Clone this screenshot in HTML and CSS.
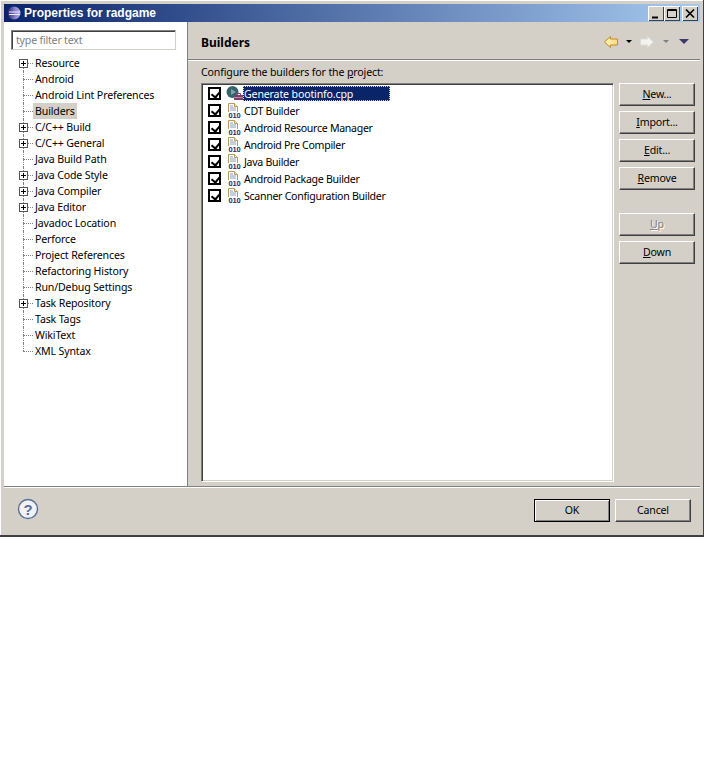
FILE: index.html
```html
<!DOCTYPE html>
<html lang="en">
<head>
  <meta charset="UTF-8">
  <meta name="viewport" content="width=device-width, initial-scale=1.0">
  <title>Properties for radgame</title>
  <link rel="stylesheet" href="styles.css">
</head>
<body>
  <div class="window">
    <div class="titlebar">
      <svg class="app-icon" width="14" height="14" viewBox="0 0 14 14">
        <defs>
          <linearGradient id="globe" x1="0" x2="1" y1="0" y2="0">
            <stop offset="0" stop-color="#2a2470"/>
            <stop offset=".6" stop-color="#8c86d0"/>
            <stop offset="1" stop-color="#b4aee4"/>
          </linearGradient>
          <linearGradient id="backFill" x1="0" x2="1" y1="0" y2="0">
            <stop offset="0" stop-color="#fff2b8"/>
            <stop offset="1" stop-color="#fbdc80"/>
          </linearGradient>
        </defs>
        <circle cx="7" cy="7" r="6.500" fill="url(#globe)"/>
        <path d="M2 6h11M2 8.500h11" stroke="#eeeef8"/>
      </svg>
      <span class="title">Properties for radgame</span>
      <div class="win-buttons">
        <button class="win-btn"><svg width="14" height="13" viewBox="0 0 14 13"><path d="M3 9.500h6v2H3z" fill="#000"/></svg></button>
        <button class="win-btn"><svg width="14" height="13" viewBox="0 0 14 13"><path d="M2.500 2.500h9v8h-9zM2 3.500h10" fill="none" stroke="#000"/></svg></button>
        <button class="win-btn close"><svg width="14" height="13" viewBox="0 0 14 13"><path d="M3 2.500l8 8M11 2.500l-8 8" fill="none" stroke="#000" stroke-width="1.700"/></svg></button>
      </div>
    </div>

    <div class="content">
      <div class="sidebar">
        <input class="filter" type="text" placeholder="type filter text">
        <ul class="tree">
          <li class="node"><span class="guide"><span class="box"></span></span><span class="label">Resource</span></li>
          <li class="node"><span class="guide"></span><span class="label">Android</span></li>
          <li class="node"><span class="guide"></span><span class="label">Android Lint Preferences</span></li>
          <li class="node"><span class="guide"></span><span class="label current">Builders</span></li>
          <li class="node"><span class="guide"><span class="box"></span></span><span class="label">C/C++ Build</span></li>
          <li class="node"><span class="guide"><span class="box"></span></span><span class="label">C/C++ General</span></li>
          <li class="node"><span class="guide"></span><span class="label">Java Build Path</span></li>
          <li class="node"><span class="guide"><span class="box"></span></span><span class="label">Java Code Style</span></li>
          <li class="node"><span class="guide"><span class="box"></span></span><span class="label">Java Compiler</span></li>
          <li class="node"><span class="guide"><span class="box"></span></span><span class="label">Java Editor</span></li>
          <li class="node"><span class="guide"></span><span class="label">Javadoc Location</span></li>
          <li class="node"><span class="guide"></span><span class="label">Perforce</span></li>
          <li class="node"><span class="guide"></span><span class="label">Project References</span></li>
          <li class="node"><span class="guide"></span><span class="label">Refactoring History</span></li>
          <li class="node"><span class="guide"></span><span class="label">Run/Debug Settings</span></li>
          <li class="node"><span class="guide"><span class="box"></span></span><span class="label">Task Repository</span></li>
          <li class="node"><span class="guide"></span><span class="label">Task Tags</span></li>
          <li class="node"><span class="guide"></span><span class="label">WikiText</span></li>
          <li class="node last"><span class="guide"></span><span class="label">XML Syntax</span></li>
        </ul>
      </div>

      <div class="main">
        <div class="page-head">
          <h1>Builders</h1>
          <div class="nav-tools">
            <svg width="16" height="14" viewBox="0 0 16 14"><path d="M7.500 1.500L1.500 7l6 5.500V10h7V4h-7z" fill="url(#backFill)" stroke="#c98a1c"/></svg>
            <span class="drop dark"></span>
            <svg class="nav-fwd" width="16" height="14" viewBox="0 0 16 14"><path d="M8.500 1.500l6 5.500-6 5.500V10h-7V4h7z" fill="#f4f3f0" stroke="#dedcd6"/></svg>
            <span class="drop muted"></span>
            <span class="drop menu"></span>
          </div>
        </div>

        <div class="page-body">
          <p class="intro">Configure the builders for the <u>p</u>roject:</p>
          <div class="builders">
            <ul class="list">
              <li class="item">
                <span class="check"></span>
                <svg class="item-icon" width="18" height="17" viewBox="0 0 18 17">
                  <circle cx="7.500" cy="7" r="6" fill="#33646c"/>
                  <path d="M6 4l5 3-5 3z" fill="#7fa3a8"/>
                  <rect x="9" y="10" width="9" height="5" fill="#7c3f6a"/>
                  <path d="M9 12.500h9" stroke="#b98aa8"/>
                  <path d="M11.500 10V8.500h4V10" fill="none" stroke="#7c3f6a"/>
                </svg>
                <span class="item-text selected">Generate bootinfo.cpp</span>
              </li>
              <li class="item"><span class="check"></span><svg class="item-icon" width="18" height="17" viewBox="0 0 18 17"><path class="page" d="M3.500 10V1.500h6l3 3V10"/><path class="fold" d="M9.500 1.500v3h3"/><path class="lines" d="M5 4h3M5 6h6M5 8h6"/><text x="9.500" y="16" class="bin-text">010</text></svg><span class="item-text">CDT Builder</span></li>
              <li class="item"><span class="check"></span><svg class="item-icon" width="18" height="17" viewBox="0 0 18 17"><path class="page" d="M3.500 10V1.500h6l3 3V10"/><path class="fold" d="M9.500 1.500v3h3"/><path class="lines" d="M5 4h3M5 6h6M5 8h6"/><text x="9.500" y="16" class="bin-text">010</text></svg><span class="item-text">Android Resource Manager</span></li>
              <li class="item"><span class="check"></span><svg class="item-icon" width="18" height="17" viewBox="0 0 18 17"><path class="page" d="M3.500 10V1.500h6l3 3V10"/><path class="fold" d="M9.500 1.500v3h3"/><path class="lines" d="M5 4h3M5 6h6M5 8h6"/><text x="9.500" y="16" class="bin-text">010</text></svg><span class="item-text">Android Pre Compiler</span></li>
              <li class="item"><span class="check"></span><svg class="item-icon" width="18" height="17" viewBox="0 0 18 17"><path class="page" d="M3.500 10V1.500h6l3 3V10"/><path class="fold" d="M9.500 1.500v3h3"/><path class="lines" d="M5 4h3M5 6h6M5 8h6"/><text x="9.500" y="16" class="bin-text">010</text></svg><span class="item-text">Java Builder</span></li>
              <li class="item"><span class="check"></span><svg class="item-icon" width="18" height="17" viewBox="0 0 18 17"><path class="page" d="M3.500 10V1.500h6l3 3V10"/><path class="fold" d="M9.500 1.500v3h3"/><path class="lines" d="M5 4h3M5 6h6M5 8h6"/><text x="9.500" y="16" class="bin-text">010</text></svg><span class="item-text">Android Package Builder</span></li>
              <li class="item"><span class="check"></span><svg class="item-icon" width="18" height="17" viewBox="0 0 18 17"><path class="page" d="M3.500 10V1.500h6l3 3V10"/><path class="fold" d="M9.500 1.500v3h3"/><path class="lines" d="M5 4h3M5 6h6M5 8h6"/><text x="9.500" y="16" class="bin-text">010</text></svg><span class="item-text">Scanner Configuration Builder</span></li>
            </ul>
            <div class="side-buttons">
              <button class="btn"><u>N</u>ew...</button>
              <button class="btn"><u>I</u>mport...</button>
              <button class="btn"><u>E</u>dit...</button>
              <button class="btn"><u>R</u>emove</button>
              <button class="btn disabled gap-top"><u>U</u>p</button>
              <button class="btn"><u>D</u>own</button>
            </div>
          </div>
        </div>
      </div>
    </div>

    <div class="footer">
      <svg class="help" width="22" height="22" viewBox="0 0 22 22">
        <circle cx="11" cy="11" r="9.500" fill="#f2f2f4" stroke="#56709c" stroke-width="1.400"/>
        <text x="11" y="16.500" class="help-mark">?</text>
      </svg>
      <div class="actions">
        <button class="btn default">OK</button>
        <button class="btn">Cancel</button>
      </div>
    </div>
  </div>
</body>
</html>
```

FILE: styles.css
```css
/* General Styles */
* {
  margin: 0;
  padding: 0;
  box-sizing: border-box;
}

body {
  font-family: "Noto Sans", Tahoma, sans-serif;
  font-size: 10.6px;
  letter-spacing: -0.2px;
  color: #000;
  background-color: #fff;
  overflow: hidden;
}

ul {
  list-style: none;
}

/* Window frame */
.window {
  width: 704px;
  height: 537px;
  display: flex;
  flex-direction: column;
  padding: 4px 3px 4px 4px;
  background: #d4d0c8;
  border-right: 1px solid #404040;
  border-bottom: 2px solid #404040;
  box-shadow: inset 1px 1px 0 #fff;
}

.titlebar {
  height: 18px;
  flex: none;
  display: flex;
  align-items: center;
  padding-left: 3px;
  background: linear-gradient(to right, #0a246a, #a6caf0);
}

.app-icon {
  flex: none;
}

.title {
  margin-left: 3px;
  font-family: "Liberation Sans", sans-serif;
  font-size: 12px;
  font-weight: bold;
  letter-spacing: 0;
  color: #fff;
}

.win-buttons {
  margin-left: auto;
  margin-right: 2px;
  display: flex;
}

.win-btn {
  width: 16px;
  height: 15px;
  display: flex;
  align-items: center;
  justify-content: center;
  background: #d4d0c8;
  border: none;
  box-shadow: inset 1px 1px 0 #fff, inset -1px -1px 0 #404040;
}

.win-btn.close {
  margin-left: 2px;
}

.content {
  flex: 1;
  display: flex;
  min-height: 0;
  border-bottom: 1px solid #fff;
  box-shadow: inset 0 -1px 0 #808080;
}

/* Left tree */
.sidebar {
  width: 184px;
  flex: none;
  background: #fff;
  padding: 8px 7px 0;
  margin-bottom: 1px;
  border-right: 1px solid #808080;
}

.filter {
  display: block;
  width: 165px;
  height: 20px;
  padding: 0 4px;
  font: inherit;
  letter-spacing: inherit;
  border: 1px solid #808080;
  border-right-color: #d4d0c8;
  border-bottom-color: #d4d0c8;
  box-shadow: inset 1px 1px 0 #404040, inset -1px -1px 0 #fff;
  outline: none;
}

.filter::placeholder {
  color: #808080;
  opacity: 1;
}

.tree {
  margin-top: 5px;
}

.node {
  height: 16px;
  display: flex;
  align-items: center;
}

.guide {
  position: relative;
  width: 22px;
  height: 16px;
  flex: none;
}

.guide::before {
  content: "";
  position: absolute;
  left: 12px;
  top: 0;
  bottom: 0;
  border-left: 1px dotted #808080;
}

.guide::after {
  content: "";
  position: absolute;
  left: 12px;
  top: 8px;
  width: 10px;
  border-top: 1px dotted #808080;
}

.node:first-child .guide::before {
  top: 8px;
}

.node.last .guide::before {
  bottom: 8px;
}

/* expander drawn over the guide lines */
.box {
  position: absolute;
  z-index: 1;
  left: 8px;
  top: 4px;
  width: 9px;
  height: 9px;
  border: 1px solid #555;
  background:
    linear-gradient(#000, #000) center / 5px 1px no-repeat,
    linear-gradient(#000, #000) center / 1px 5px no-repeat,
    #fff;
}

.label {
  padding: 0 2px;
  height: 16px;
  line-height: 16px;
  white-space: nowrap;
  letter-spacing: -0.15px;
}

.label.current {
  background: #d4d0c8;
}

/* Right page */
.main {
  flex: 1;
  min-width: 0;
  display: flex;
  flex-direction: column;
}

.page-head {
  height: 38px;
  flex: none;
  display: flex;
  align-items: center;
  justify-content: space-between;
  padding: 2px 11px 0 13px;
  border-bottom: 1px solid #808080;
  box-shadow: 0 1px 0 #fff;
}

h1 {
  padding-top: 1px;
  font-size: 12px;
  font-weight: bold;
  letter-spacing: 0;
}

.nav-tools {
  display: flex;
  align-items: center;
}

.nav-fwd {
  margin-left: 7px;
}

.drop {
  width: 0;
  height: 0;
  margin-left: 7px;
  border-left: 3px solid transparent;
  border-right: 3px solid transparent;
  border-top: 3px solid #000;
}

.drop.muted {
  margin-left: 8px;
  border-top-color: #808080;
}

.drop.menu {
  margin-left: 10px;
  border-left-width: 5px;
  border-right-width: 5px;
  border-top: 5px solid #3c3a6a;
}

.page-body {
  flex: 1;
  padding: 5px 5px 5px 13px;
  display: flex;
  flex-direction: column;
  min-height: 0;
}

.intro {
  height: 18px;
  line-height: 15px;
  letter-spacing: -0.15px;
}

.builders {
  flex: 1;
  display: flex;
  gap: 5px;
  min-height: 0;
}

.list {
  flex: 1;
  background: #fff;
  border: 1px solid #808080;
  border-right-color: #fff;
  border-bottom-color: #fff;
  box-shadow: inset 1px 1px 0 #404040, inset -1px -1px 0 #d4d0c8;
  padding: 1px 2px 2px;
}

.item {
  height: 17px;
  display: flex;
  align-items: center;
  padding-left: 4px;
}

.check {
  position: relative;
  width: 13px;
  height: 13px;
  flex: none;
  background: #fff;
  border: 2px solid #000;
}

.check::after {
  content: "";
  position: absolute;
  left: 3px;
  top: 0;
  width: 4px;
  height: 7px;
  border: solid #000;
  border-width: 0 2px 2px 0;
  transform: rotate(40deg);
}

.item-icon {
  flex: none;
  margin-left: 4px;
}

.page {
  fill: #fff;
  stroke: #b89a5a;
}

.fold {
  fill: #f3e6b8;
  stroke: #b89a5a;
}

.lines {
  fill: none;
  stroke: #8a9cc0;
}

.bin-text {
  font-family: "Liberation Sans", sans-serif;
  font-size: 7.5px;
  font-weight: bold;
  letter-spacing: -0.2px;
  text-anchor: middle;
  fill: #1d2f66;
}

.item-text {
  height: 15px;
  line-height: 16px;
  padding: 0 1px;
  white-space: nowrap;
  letter-spacing: -0.3px;
}

.item-text.selected {
  width: 147px;
  color: #fff;
  letter-spacing: -0.15px;
  background: #0a246a;
  outline: 1px dotted #d4d0c8;
  outline-offset: -1px;
}

.side-buttons {
  width: 76px;
  flex: none;
  display: flex;
  flex-direction: column;
  gap: 5px;
}

.btn {
  height: 23px;
  width: 76px;
  padding-bottom: 1px;
  font-family: inherit;
  font-size: 10.6px;
  letter-spacing: -0.2px;
  color: #000;
  background: #d4d0c8;
  border: 1px solid;
  border-color: #fff #404040 #404040 #fff;
  box-shadow: inset -1px -1px 0 #808080;
}

.btn.gap-top {
  margin-top: 18px;
}

.btn.disabled {
  color: #808080;
  text-shadow: 1px 1px 0 #fff;
}

/* Footer */
.footer {
  height: 43px;
  flex: none;
  display: flex;
  align-items: center;
  justify-content: space-between;
  padding: 2px 9px 0 13px;
}

.help {
  margin-top: -3px;
}

.help-mark {
  font-family: "Liberation Sans", sans-serif;
  font-size: 15px;
  font-weight: bold;
  text-anchor: middle;
  fill: #56709c;
}

.actions {
  display: flex;
  align-items: center;
  gap: 5px;
}

.btn.default {
  border-color: #000;
  box-shadow: inset 1px 1px 0 #fff, inset -1px -1px 0 #808080;
}
```
